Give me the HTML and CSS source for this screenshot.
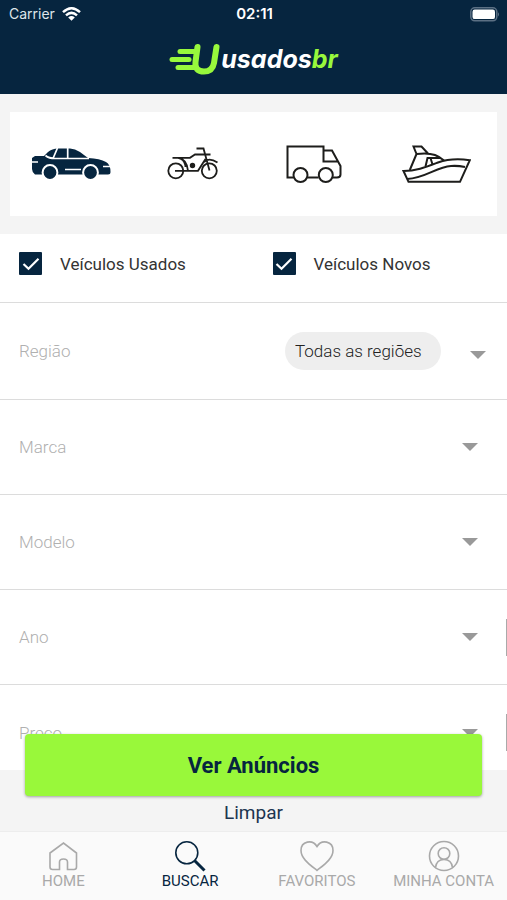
FILE: index.html
```html
<!DOCTYPE html>
<html lang="pt-BR">
<head>
<meta charset="utf-8">
<meta name="viewport" content="width=device-width, initial-scale=1">
<title>usadosbr</title>
<link rel="stylesheet" href="styles.css">
</head>
<body>
<header class="top">
  <div class="status">
    <div class="status-left">
      <span>Carrier</span>
      <svg width="19" height="14" viewBox="0 0 19 14" aria-hidden="true">
        <g fill="none" stroke="#fff" stroke-width="2.5">
          <path d="M1 5.2Q9.500-2.600 18 5.200"/>
          <path d="M4 8.400Q9.500 3.400 15 8.400"/>
        </g>
        <path d="M6.200 10.400Q9.500 7.700 12.800 10.400L9.500 13.800Z" fill="#fff"/>
      </svg>
    </div>
    <time class="clock">02:11</time>
    <div class="status-right">
      <svg width="30" height="15" viewBox="0 0 30 15" aria-hidden="true">
        <rect x=".8" y=".8" width="26" height="13" rx="4" fill="none" stroke="#5b7084" stroke-width="1.500"/>
        <rect x="2.500" y="2.500" width="22.500" height="9.600" rx="2.200" fill="#fff"/>
        <path d="M28 5.200Q30 7.300 28 9.400Z" fill="#5b7084"/>
      </svg>
    </div>
  </div>
  <a class="brand" href="#">
    <svg width="51" height="32" viewBox="0 0 51 32" aria-hidden="true">
      <g fill="none" stroke="#98f83c" stroke-width="5" stroke-linecap="round" stroke-linejoin="round">
        <path d="M11 8.500H27"/>
        <path d="M3 16.500H20"/>
        <path d="M9 24.500H27"/>
        <path stroke-width="6" d="M28.500 4L26.500 19Q25.500 28.500 35 28.500Q43.500 28.500 45 20L47.500 4"/>
      </g>
    </svg>
    <span class="brand-name">usados<span class="brand-br">br</span></span>
  </a>
</header>

<main class="search">
  <form class="filters">
    <div class="types">
      <button class="type" type="button" aria-label="Carros" aria-pressed="true">
        <svg width="80" height="32" viewBox="0 0 80 32">
          <path fill="#06253f" d="M1 12V10L4 8H13L17 4Q21 .500 27 .500H39Q44 .500 49 4L57 10Q69 10.500 75 14Q79.500 16.500 79.500 24Q79.500 26.500 77 26.500H4Q1 24 1 21Z"/>
          <g fill="#06253f" stroke="#fff" stroke-width="2"><circle cx="19" cy="24.500" r="7.400"/><circle cx="59.500" cy="24.500" r="7.400"/></g>
          <path fill="none" stroke="#fff" stroke-width="1.700" d="M14.500 7.500Q18 10.500 24 10.500H58M26.500 0L22 10.500M36.700 0V10.500M34 21.500H50M0 14H7M72 18.500H80"/>
        </svg>
      </button>
      <button class="type" type="button" aria-label="Motos" aria-pressed="false">
        <svg width="52" height="34" viewBox="0 0 52 34" fill="none" stroke="#1d1d1b" stroke-width="1.800">
          <circle cx="8.800" cy="23.800" r="7.500"/><circle cx="42.300" cy="23.800" r="7.500"/>
          <path d="M29.500 1.500H36.500L42.500 23.500M35 7.500L43.500 7.500M5.500 10.800H23L28 7.500H37M11 10.800Q20 12 21 23.800M8 23.800H31L38.500 12M14 12Q18 14 18.500 20M37 15Q42 10 50.500 15.500"/>
          <circle cx="25.500" cy="18.500" r="1.800" fill="#1d1d1b"/>
        </svg>
      </button>
      <button class="type" type="button" aria-label="Caminhões" aria-pressed="false">
        <svg width="56" height="38" viewBox="0 0 56 38" fill="none" stroke="#1d1d1b" stroke-width="2">
          <path d="M7.500 32.500H1.500V1.500H37.500V16.500H51.500M37.500 5.500H46L54.500 21V29.500Q54.500 32.500 51 32.500H47M32.500 32.500H21.500"/>
          <circle cx="14.500" cy="30" r="7"/><circle cx="39.800" cy="30" r="7"/>
        </svg>
      </button>
      <button class="type" type="button" aria-label="Barcos" aria-pressed="false">
        <svg width="69" height="38" viewBox="0 0 69 38" fill="none" stroke="#1d1d1b" stroke-width="2">
          <path d="M1.500 26L6.500 36.800H58L67.800 15.200Q50 12.500 36 17.500C24 22 14 26 1.500 26Z"/>
          <path d="M5 34C24 33 34 22 49 21Q56 20.500 63 22M7.800 25L14.500 9Q26 7.500 33 10Q38 12 42 15.500M14.500 9L11.500 1.500H19.500L26 8.500M23.500 21.500L25.500 13H39M28.500 13L30.500 19.500"/>
        </svg>
      </button>
    </div>

    <div class="conditions">
      <label class="check">
        <span class="box">
          <input type="checkbox" checked>
          <svg class="tick" width="18" height="14" viewBox="0 0 18 14" aria-hidden="true"><path d="M1.500 7L6.500 11.800L16.500 1.800" fill="none" stroke="#fff" stroke-width="2.200"/></svg>
        </span>
        <span>Veículos Usados</span>
      </label>
      <label class="check">
        <span class="box">
          <input type="checkbox" checked>
          <svg class="tick" width="18" height="14" viewBox="0 0 18 14" aria-hidden="true"><path d="M1.500 7L6.500 11.800L16.500 1.800" fill="none" stroke="#fff" stroke-width="2.200"/></svg>
        </span>
        <span>Veículos Novos</span>
      </label>
    </div>

    <div class="row row-region">
      <label for="regiao">Região</label>
      <select id="regiao" class="chip"><option>Todas as regiões</option></select>
      <svg class="arrow" width="16" height="8" viewBox="0 0 16 8" aria-hidden="true"><path d="M0 0H16L8 8Z"/></svg>
    </div>
    <div class="row">
      <label for="marca">Marca</label>
      <select id="marca" class="plain"><option></option></select>
      <svg class="arrow" width="16" height="8" viewBox="0 0 16 8" aria-hidden="true"><path d="M0 0H16L8 8Z"/></svg>
    </div>
    <div class="row">
      <label for="modelo">Modelo</label>
      <select id="modelo" class="plain"><option></option></select>
      <svg class="arrow" width="16" height="8" viewBox="0 0 16 8" aria-hidden="true"><path d="M0 0H16L8 8Z"/></svg>
    </div>
    <div class="row row-edge">
      <label for="ano">Ano</label>
      <select id="ano" class="plain"><option></option></select>
      <svg class="arrow" width="16" height="8" viewBox="0 0 16 8" aria-hidden="true"><path d="M0 0H16L8 8Z"/></svg>
    </div>
    <div class="row row-edge">
      <label for="preco">Preço</label>
      <select id="preco" class="plain"><option></option></select>
      <svg class="arrow" width="16" height="8" viewBox="0 0 16 8" aria-hidden="true"><path d="M0 0H16L8 8Z"/></svg>
    </div>
  </form>
  <div class="actions">
    <button class="submit" type="button">Ver Anúncios</button>
    <button class="clear" type="button">Limpar</button>
  </div>
</main>

<nav class="tabs">
  <a class="tab" href="#">
    <svg width="32" height="32" viewBox="0 0 32 32"><path d="M12.500 29.500V22Q12.500 19 16.500 19Q20.500 19 20.500 22V29.500H27Q29.500 29.500 29.500 27V13L16.500 3L3 13V27Q3 29.500 5.500 29.500Z"/></svg>
    <span>HOME</span>
  </a>
  <a class="tab tab-active" href="#" aria-current="page">
    <svg width="32" height="32" viewBox="0 0 32 32"><circle cx="12.800" cy="12.800" r="11"/><path stroke-width="3" d="M20.500 20.500L30.500 30.500"/></svg>
    <span>BUSCAR</span>
  </a>
  <a class="tab" href="#">
    <svg width="36" height="32" viewBox="0 0 36 32"><path d="M18 30.500C12 25.500 2 19 2 10.500C2 1 13.500-1 18 6.500C22.500-1 34 1 34 10.500C34 19 24 25.500 18 30.500Z"/></svg>
    <span>FAVORITOS</span>
  </a>
  <a class="tab" href="#">
    <svg width="32" height="32" viewBox="0 0 32 32"><circle cx="16" cy="16" r="14.500"/><circle cx="16" cy="13.500" r="5.800"/><path d="M7.500 27.500Q8.500 19.500 16 19.500Q23.500 19.500 24.500 27.500"/></svg>
    <span>MINHA CONTA</span>
  </a>
</nav>
</body>
</html>
```
FILE: styles.css
```css
* { box-sizing: border-box; }

body {
  margin: 0;
  height: 100vh;
  display: flex;
  flex-direction: column;
  overflow: hidden;
  background: #f4f4f4;
  color: #333;
  font-family: Roboto, "Liberation Sans", sans-serif;
}

button, select { font-family: inherit; border: 0; margin: 0; }
a { text-decoration: none; }

/* Header */
.top {
  flex: none;
  height: 94px;
  background: #06253f;
  color: #fff;
  display: flex;
  flex-direction: column;
  align-items: center;
}
.status {
  width: 100%;
  height: 28px;
  padding: 0 7px 0 9px;
  display: grid;
  grid-template-columns: 1fr auto 1fr;
  align-items: center;
  font: 400 14px/20px Inter, "Liberation Sans", sans-serif;
}
.status-left { display: flex; align-items: center; gap: 7px; color: #dfe5ea; }
.status-right { display: flex; justify-content: flex-end; }
.clock { font-size: 15px; font-weight: 600; }
.brand { display: flex; align-items: center; height: 62px; gap: 1px; color: #fff; }
.brand-name { font: italic 700 25px/28px Inter, sans-serif; }
.brand-br { color: #98f83c; }

/* Filters */
.search { flex: 1; min-height: 0; }
.types {
  margin: 18px 10px;
  height: 104px;
  display: grid;
  grid-template-columns: repeat(4, 1fr);
  background: #fff;
}
.type {
  display: flex;
  align-items: center;
  justify-content: center;
  padding: 0;
  background: none;
}
.conditions {
  height: 69px;
  padding-bottom: 9px;
  display: grid;
  grid-template-columns: 1fr 1fr;
  background: #fff;
  border-bottom: 1px solid #dcdcdc;
}
.check {
  display: flex;
  align-items: center;
  gap: 18px;
  padding-left: 19px;
  font-size: 17px;
  line-height: 20px;
}
.box { display: grid; place-items: center; }
.box > * { grid-area: 1 / 1; }
.box input {
  appearance: none;
  width: 23px;
  height: 23px;
  margin: 0;
  border-radius: 1px;
  background: #06253f;
}
.tick { pointer-events: none; }

.row {
  height: 95px;
  padding: 0 29px 0 19px;
  display: flex;
  align-items: center;
  background: #fff;
  border-bottom: 1px solid #dcdcdc;
  font-size: 17px;
  line-height: 20px;
}
.row:last-child { height: 85px; border-bottom: 0; align-items: flex-start; }
.row:last-child > * { margin-top: 38px; }
.row:last-child .arrow { margin-top: 44px; }
.row label { color: #b0b0b0; font-weight: 300; }
.row-region { height: 97px; padding-right: 21px; }
.row-edge { padding-right: 0; }
.row-edge .arrow { margin-right: 28px; }
.row-edge::after { content: ""; width: 1px; height: 37px; background: #aaa; }
.row:last-child::after { margin-top: 29px; }
.plain { flex: 1; appearance: none; background: none; height: 20px; }
.chip {
  appearance: none;
  margin: 0 29px 0 auto;
  height: 38px;
  padding: 0 19px 0 10px;
  border-radius: 19px;
  background: #eee;
  color: #222;
  font-size: 17px;
  font-weight: 300;
}
.arrow { flex: none; fill: #999; }
.row-region .arrow { margin-top: 7px; }

/* Actions */
.actions {
  position: relative;
  margin: -36px 25px 0;
  display: flex;
  flex-direction: column;
}
.submit {
  height: 62px;
  border-radius: 4px;
  background: #99f83a;
  box-shadow: 0 1px 3px rgba(0, 0, 0, .35);
  color: #06253f;
  font-size: 22px;
  font-weight: 700;
}
.clear {
  align-self: center;
  height: 32px;
  padding: 0;
  background: none;
  color: #1c3550;
  font-size: 19px;
}

/* Bottom tabs */
.tabs {
  flex: none;
  height: 69px;
  padding-top: 8px;
  display: grid;
  grid-template-columns: repeat(4, 1fr);
  background: #fafafa;
  border-top: 1px solid #ededed;
}
.tab {
  display: flex;
  flex-direction: column;
  align-items: center;
  color: #a9a9a9;
  font-size: 15px;
  line-height: 18px;
}
.tab svg { fill: none; stroke: currentColor; stroke-width: 1.6; }
.tab-active { color: #06253f; }
```
